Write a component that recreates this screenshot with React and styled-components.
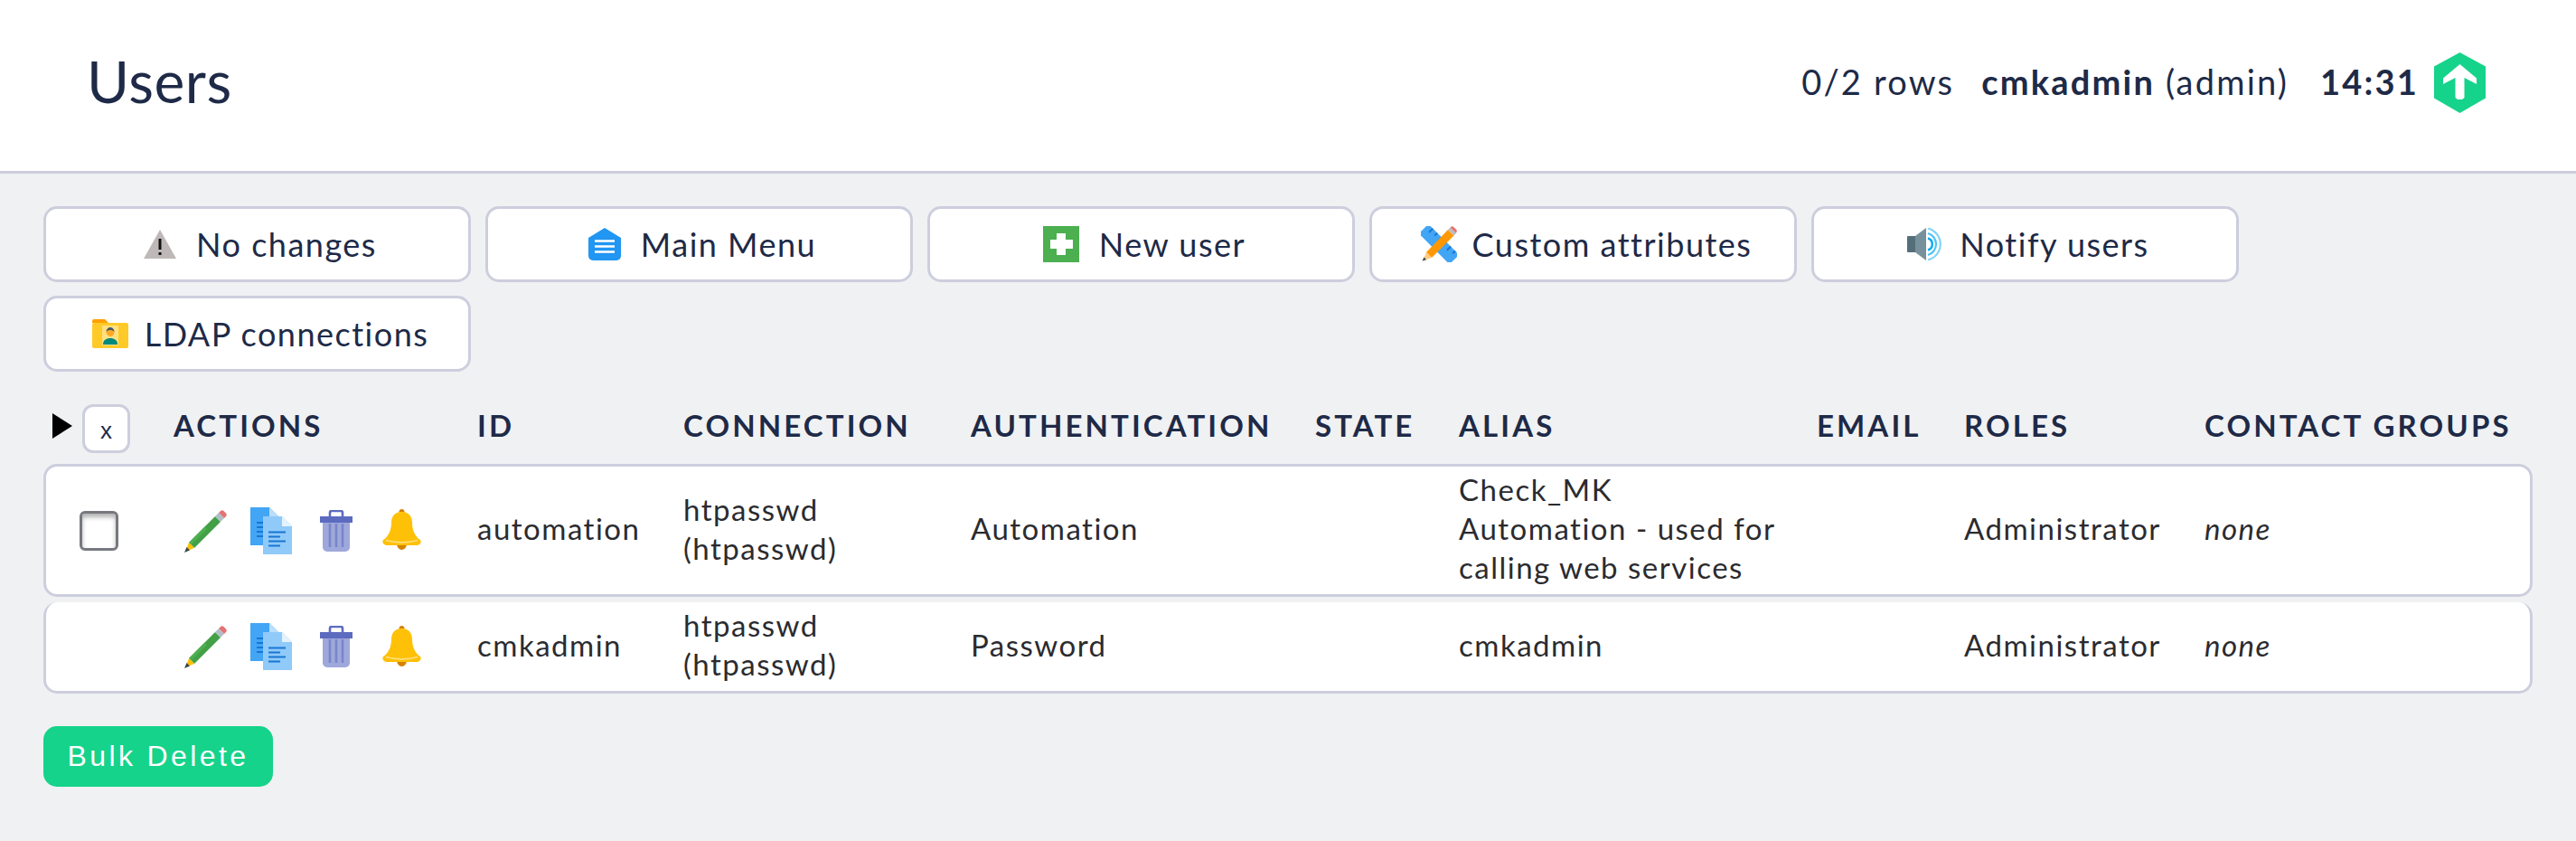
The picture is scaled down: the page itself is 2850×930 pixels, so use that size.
import React from "react";
import styled, { createGlobalStyle } from "styled-components";

const Global = createGlobalStyle`
  html, body { margin: 0; padding: 0; background: #f0f1f3; }
  body { font-family: Lato, "Liberation Sans", sans-serif; color: #1e2a47; }
`;
const Page = styled.div`
  width: 2850px; height: 930px; overflow: hidden; background: #f0f1f3;
`;
const Header = styled.header`
  height: 189px; background: #fff; border-bottom: 3px solid #cdcedd;
  display: flex; align-items: center; justify-content: space-between;
  padding: 0 100px 0 96px;
`;
const Title = styled.h1`
  margin: 0; font-size: 64px; font-weight: 400; color: #1e2a47; letter-spacing: 0.6px;
  position: relative; top: -5px;
`;
const Meta = styled.div`
  display: flex; align-items: center; font-size: 38px; letter-spacing: 2.2px; color: #1e2a47;
  position: relative; top: -3px;
`;
const MetaText = styled.span`
  position: relative; top: -2px; margin-right: ${p => p.$gap}px;
  b { font-weight: 700; }
`;
const Content = styled.main` padding: 36px 48px 0; `;
const Toolbar = styled.div`
  display: grid; grid-template-columns: repeat(5, 473px); gap: 15px 16px;
`;
const Btn = styled.button`
  height: 84px; box-sizing: border-box; background: #fff; border: 3px solid #cdcedd; border-radius: 15px;
  display: flex; align-items: center; justify-content: center; gap: ${p => p.$gap || 22}px;
  font-family: Lato, sans-serif; font-size: 36px; letter-spacing: 1.5px; color: #1e2a47; padding: 0 0 0 7px;
`;
const grid = "144px 336px 228px 318px 381px 159px 396px 163px 266px 363px";
const Head = styled.div`
  display: grid; grid-template-columns: ${grid}; height: 54px; margin: 36px 0 12px; align-items: center;
`;
const Toggle = styled.div`
  display: flex; align-items: center; padding-left: 10px; gap: 11px;
`;
const Triangle = styled.span`
  width: 0; height: 0; margin-top: -6px; border-left: 22px solid #000; border-top: 14px solid transparent; border-bottom: 14px solid transparent;
`;
const XBtn = styled.button`
  width: 53px; height: 54px; box-sizing: border-box; background: #fff; border: 3px solid #cdcedd; border-radius: 12px;
  font-family: "Liberation Sans", sans-serif; font-size: 26px; color: #1e2a47; padding: 4px 0 0;
`;
const HeadCell = styled.div`
  font-size: 33px; font-weight: 700; letter-spacing: 3.1px; color: #1e2a47; white-space: nowrap; margin-top: -8px;
`;
const Row = styled.div`
  display: grid; grid-template-columns: ${grid}; align-items: center; box-sizing: border-box;
  height: ${p => p.$h}px; background: #fff; border: 3px solid #cdcedd; border-radius: 15px;
  ${p => p.$noTop ? "border-top: 0; margin-top: 6px;" : ""}
  & > *:first-child { margin-left: -3px; }
`;
const Cell = styled.div`
  font-size: 33px; line-height: 43px; letter-spacing: 1.5px; color: #2b2b2f; position: relative; top: -2px;
  font-style: ${p => p.$italic ? "italic" : "normal"}; margin-left: -3px;
`;
const CheckCell = styled.div` display: flex; justify-content: flex-start; padding-left: 40px; `;
const Check = styled.span`
  width: 43px; height: 44px; box-sizing: border-box; border: 3px solid #77797f; border-radius: 6px; background: #fff;
  box-shadow: inset 0 4px 5px rgba(0,0,0,.3);
`;
const Actions = styled.div` display: flex; margin-left: -3px; `;
const ActionIcon = styled.a`
  width: 72px; display: flex; justify-content: center; align-items: center; height: 54px;
`;
const Bulk = styled.button`
  display: block; margin-top: 36px; width: 254px; height: 67px; border: 0; border-radius: 15px; background: #15d38a;
  color: #fff; font-family: "Liberation Sans", sans-serif; font-size: 32px; letter-spacing: 3.4px; padding: 0;
`;

const Warn = () => (<svg width="36" height="32" viewBox="0 0 36 32"><path d="M18 0L36 32H0Z" fill="#bfb8b8"/><rect x="16.5" y="10" width="3" height="12" fill="#111"/><rect x="16.5" y="25" width="3" height="3" fill="#111"/></svg>);
const MenuIcon = () => (<svg width="36" height="36" viewBox="0 0 36 36"><path d="M18 0L36 11V31a5 5 0 0 1-5 5H5a5 5 0 0 1-5-5V11Z" fill="#2196f3"/><path d="M7 15.5H29M7 21.5H29M7 27.5H29" stroke="#fff" strokeWidth="2.4" fill="none" transform="translate(0 -1)"/></svg>);
const Plus = () => (<svg width="40" height="40" viewBox="0 0 40 40"><rect width="40" height="40" fill="#4caf50"/><path d="M15 8h10v7h8v10h-8v7H15v-7H8V15h7Z" fill="#fff"/></svg>);
const Cross = () => (<svg width="40" height="40" viewBox="0 0 40 40">
  <g transform="rotate(45 20 20)"><rect x="-4" y="12.5" width="48" height="15" fill="#42a5f5"/><path d="M3 12.5v6M10 12.5v4M17 12.5v6M24 12.5v4M31 12.5v6M38 12.5v4" stroke="#1976d2" strokeWidth="2" /></g>
  <path d="M6 29L30 4L36.5 10.5L12 35Z" fill="#ff9800"/><path d="M6 29L12 35L2 38.5Z" fill="#ffcc80"/><path d="M3.6 34.5L6 37.2L1.5 38.5Z" fill="#37474f"/><path d="M30 4L32.5 1.5L39 8L36.5 10.5Z" fill="#bdbdbd"/><path d="M32.5 1.5L34 0.5a2 2 0 0 1 2.3.4l3 3a2 2 0 0 1 .3 2.3L39 8Z" fill="#e57373"/>
</svg>);
const Speaker = () => (<svg width="38" height="36" viewBox="0 0 38 36"><rect x="0" y="9" width="11" height="18" rx="1" fill="#546e7a"/><path d="M9 9L21 0V36L9 27Z" fill="#78909c"/><path d="M23 .5A18 18 0 0 1 23 35.5" stroke="#81d4fa" strokeWidth="2.2" fill="none"/><path d="M23 6A12.5 12.5 0 0 1 23 30" stroke="#4fc3f7" strokeWidth="2.2" fill="none"/><path d="M23 11.5A6.8 6.8 0 0 1 23 24.5" stroke="#03a9f4" strokeWidth="2.4" fill="none"/></svg>);
const Folder = () => (<svg width="40" height="32" viewBox="0 0 40 32"><path d="M0 2a2 2 0 0 1 2-2H14l4 4H0Z" fill="#ffa000"/><rect y="4" width="40" height="28" rx="2" fill="#ffca28"/><rect x="11" y="7" width="18" height="22" fill="#ffe082"/><circle cx="20" cy="14.5" r="4.4" fill="#ffa726"/><path d="M15.5 14a4.5 5 0 0 1 9 0c-1-1.5-3-2-4.5-2s-3.5.5-4.5 2Z" fill="#455a64"/><path d="M12 28c0-5 3.5-7 8-7s8 2 8 7Z" fill="#00897b"/></svg>);
const Logo = () => (<svg width="57" height="67" viewBox="0 0 57 67"><path d="M28.5 0L57 15.5V50.5L28.5 67L0 50.5V15.5Z" fill="#15d38a"/><path d="M28.5 13L47 28.5V35L33.5 28V50L31 52H26L23.5 50V28L10 35V28.5Z" fill="#fff"/></svg>);
const Pencil = () => (<svg width="48" height="48" viewBox="0 0 48 48"><path d="M5 37L34 8L40 14L11 43Z" fill="#43a047"/><path d="M5 37L22.5 19.5L25 22L7.5 39.5Z" fill="#4caf50"/><path d="M5 37L11 43L1 47Z" fill="#ffc107"/><path d="M2.5 42L6 45.5L0 48Z" fill="#37474f"/><path d="M34 8L38 4L44 10L40 14Z" fill="#b0bec5"/><path d="M38 4L40 2a2.5 2.5 0 0 1 3.5 0l2.5 2.5a2.5 2.5 0 0 1 0 3.5L44 10Z" fill="#e57373"/></svg>);
const Docs = () => (<svg width="46" height="52" viewBox="0 0 46 52"><path d="M0 0H21L32 11V42H0Z" fill="#42a5f5"/><path d="M21 0L32 11H21Z" fill="#bbdefb"/><path d="M7 17h7M7 22h7M7 27h7M7 32h7" stroke="#1976d2" strokeWidth="2.2"/><path d="M14 10H35L46 21V52H14Z" fill="#90caf9"/><path d="M35 10L46 21H35Z" fill="#e3f2fd"/><path d="M20 27.5H39M20 32.5H33M20 37.5H39M20 42.5H33" stroke="#1976d2" strokeWidth="2.2"/></svg>);
const Trash = () => (<svg width="36" height="46" viewBox="0 0 36 46"><path d="M3 9H33V41a5 5 0 0 1-5 5H8a5 5 0 0 1-5-5Z" fill="#9fa8da"/><path d="M11 15V41M18 15V41M25 15V41" stroke="#7986cb" strokeWidth="2.6"/><rect x="0" y="7" width="36" height="7" fill="#5c6bc0"/><path d="M11 8V3a2 2 0 0 1 2-2H23a2 2 0 0 1 2 2V8" stroke="#5c6bc0" strokeWidth="2.6" fill="none"/></svg>);
const Bell = () => (<svg width="43" height="47" viewBox="0 0 43 47"><path d="M21.5 0a3 3 0 0 1 3 3.5H18.5a3 3 0 0 1 3-3.5Z" fill="#d68100"/><path d="M16 38H27A5.5 7 0 0 1 16 38Z" fill="#d68100"/><path d="M21.5 3C30 3 33 9 33 15C33 24 37 31 42 34C44 37 41 40 38 40H5C2 40 -1 37 1 34C6 31 10 24 10 15C10 9 13 3 21.5 3Z" fill="#ffc107"/><path d="M4 34.5C15 37.5 28 37.5 39 34.5" stroke="#ffe082" strokeWidth="1.8" fill="none"/></svg>);

const buttons = [
  ["No changes", <Warn />],
  ["Main Menu", <MenuIcon />],
  ["New user", <Plus />],
  ["Custom attributes", <Cross />, 17],
  ["Notify users", <Speaker />, 20],
  ["LDAP connections", <Folder />, 18],
];
const heads = ["ACTIONS", "ID", "CONNECTION", "AUTHENTICATION", "STATE", "ALIAS", "EMAIL", "ROLES", "CONTACT GROUPS"];
const users = [
  { h: 147, id: "automation", auth: "Automation", alias: ["Check_MK", "Automation - used for", "calling web services"], check: true },
  { h: 101, id: "cmkadmin", auth: "Password", alias: ["cmkadmin"], noTop: true },
];

export default function App() {
  return (
    <Page>
      <Global />
      <Header>
        <Title>Users</Title>
        <Meta>
          <MetaText $gap={30}>0/2 rows</MetaText>
          <MetaText $gap={35}><b>cmkadmin</b> (admin)</MetaText>
          <MetaText $gap={17}><b>14:31</b></MetaText>
          <Logo />
        </Meta>
      </Header>
      <Content>
        <Toolbar>
          {buttons.map(([t, icon, gap]) => <Btn key={t} $gap={gap}>{icon}{t}</Btn>)}
        </Toolbar>
        <Head>
          <Toggle><Triangle /><XBtn>x</XBtn></Toggle>
          {heads.map(h => <HeadCell key={h}>{h}</HeadCell>)}
        </Head>
        {users.map(u => (
          <Row key={u.id} $h={u.h} $noTop={u.noTop}>
            <CheckCell>{u.check && <Check />}</CheckCell>
            <Actions>
              <ActionIcon><Pencil /></ActionIcon>
              <ActionIcon><Docs /></ActionIcon>
              <ActionIcon><Trash /></ActionIcon>
              <ActionIcon><Bell /></ActionIcon>
            </Actions>
            <Cell>{u.id}</Cell>
            <Cell>htpasswd<br />(htpasswd)</Cell>
            <Cell>{u.auth}</Cell>
            <Cell />
            <Cell>{u.alias.map((l, i) => <React.Fragment key={l}>{i > 0 && <br />}{l}</React.Fragment>)}</Cell>
            <Cell />
            <Cell>Administrator</Cell>
            <Cell $italic>none</Cell>
          </Row>
        ))}
        <Bulk>Bulk Delete</Bulk>
      </Content>
    </Page>
  );
}
